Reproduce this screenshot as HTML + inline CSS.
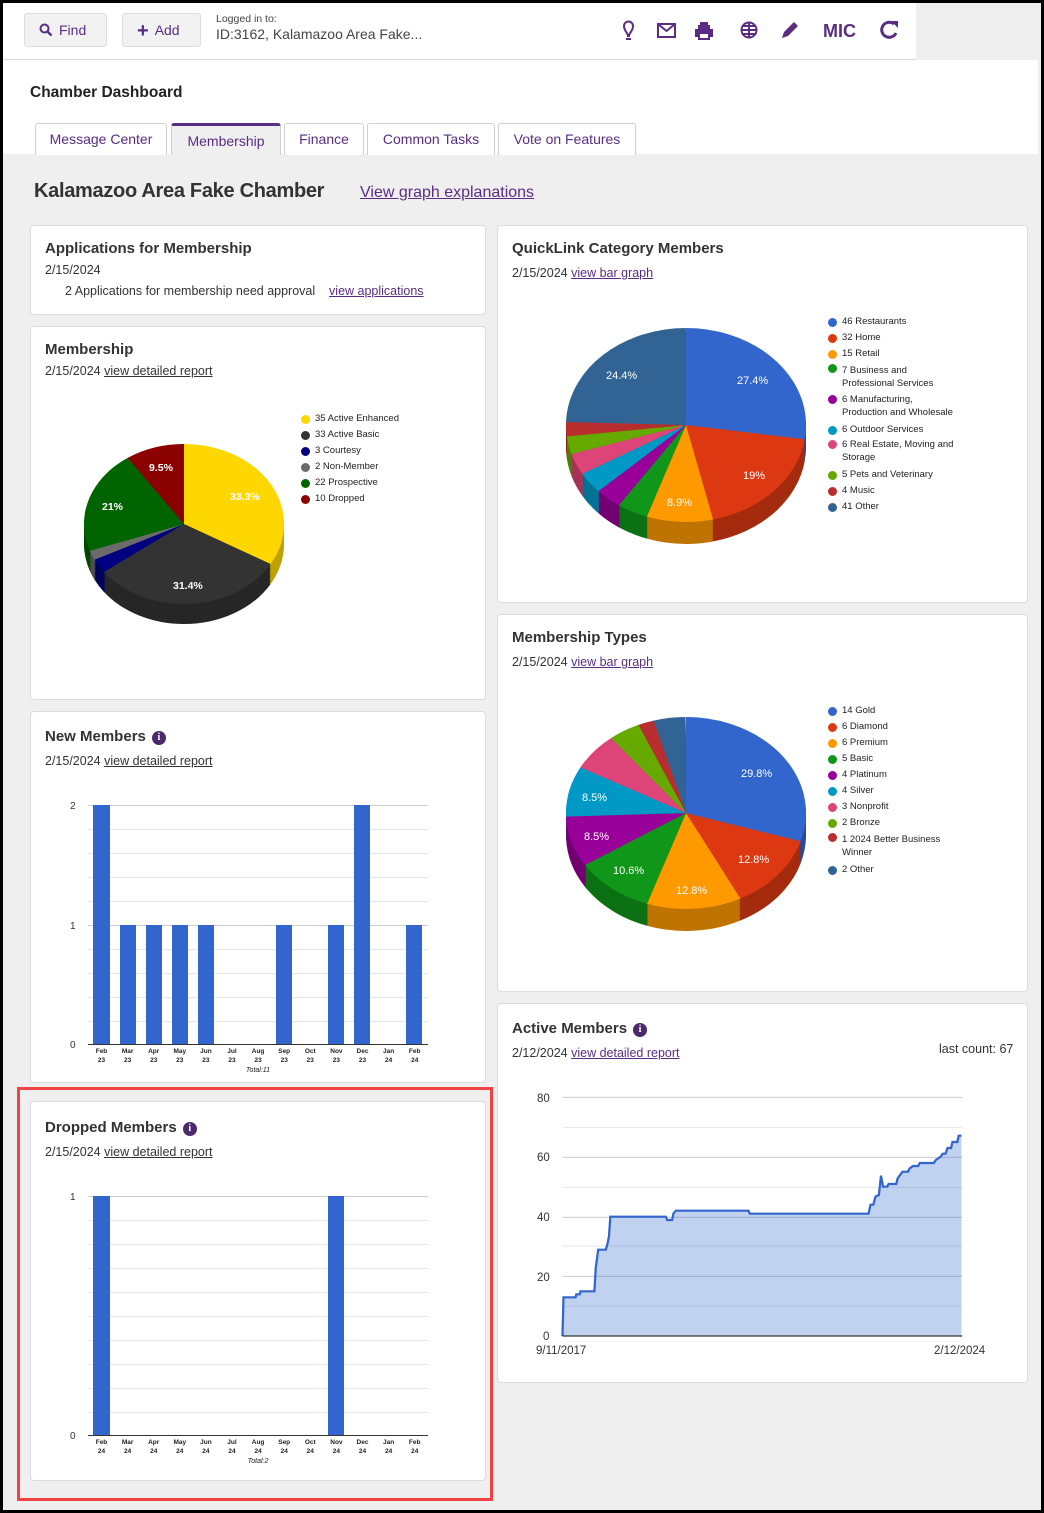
<!DOCTYPE html>
<html><head><meta charset="utf-8">
<style>
*{box-sizing:border-box;margin:0;padding:0}
body{width:1044px;height:1513px;background:#000;font-family:"Liberation Sans",sans-serif;position:relative;overflow:hidden;color:#333}
.abs{position:absolute}
#page{position:absolute;left:3px;top:3px;width:1038px;height:1507px;background:#efefef}
.card{position:absolute;background:#fff;border:1px solid #dcdcdc;border-radius:4px}
.ttl{position:absolute;font-size:15px;font-weight:bold;color:#333}
.sub{position:absolute;font-size:12.5px;color:#333}
.sub a,a{color:#5a2d82;text-decoration:underline}
.sub a.d{color:#333}
.btn{position:absolute;top:13px;height:34px;background:#f2f2f2;border:1px solid #ddd;border-radius:3px;color:#5a2d82;font-size:14px;line-height:32px;padding-left:14px}
.tab{position:absolute;top:120px;height:32px;border:1px solid #d0d0d0;border-bottom:none;background:#fff;color:#5a2d82;font-size:14px;text-align:center;line-height:30px;border-radius:3px 3px 0 0}
.info{display:inline-block;width:14px;height:14px;border-radius:50%;background:#4b2a6b;color:#fff;font-size:10px;font-weight:bold;text-align:center;line-height:14px;vertical-align:1px;margin-left:6px;font-family:"Liberation Serif",serif}
.lg{position:absolute;font-size:9.5px;color:#222;line-height:16px}
.lg div{position:relative;padding-left:14px}
.lg div i{position:absolute;left:0;top:4px;width:9px;height:9px;border-radius:50%}
svg text{font-family:"Liberation Sans",sans-serif}
</style></head><body>
<div id="page"></div>
<div class="abs" style="left:3px;top:3px;width:913px;height:57px;background:#fff;border-bottom:1px solid #ddd"></div>
<div class="btn" style="left:24px;width:83px">
<svg width="14" height="14" viewBox="0 0 14 14" style="vertical-align:-2px;margin-right:6px"><circle cx="5.5" cy="5.5" r="4" fill="none" stroke="#5a2d82" stroke-width="2"/><path d="M8.5 8.5L12.5 12.5" stroke="#5a2d82" stroke-width="2.4"/></svg>Find</div>
<div class="btn" style="left:122px;width:79px"><span style="font-size:20px;vertical-align:-2px;margin-right:6px;font-weight:bold">+</span>Add</div>
<div class="abs" style="left:216px;top:13px;font-size:10.5px;color:#444">Logged in to:</div>
<div class="abs" style="left:216px;top:26px;font-size:14px;color:#444">ID:3162, Kalamazoo Area Fake...</div>
<svg class="abs" style="left:600px;top:14px" width="310" height="34" viewBox="0 0 310 34">
<g fill="none" stroke="#5a2d82" stroke-width="2">
<path d="M28 22c0-3-4-5-4-10a4.5 4.5 0 0 1 9 0c0 5-4 7-4 10z"/><path d="M26 25h5"/>
<rect x="58" y="10" width="17" height="13"/><path d="M58 10l8.5 7 8.5-7"/>
<circle cx="149" cy="16" r="7.5"/><path d="M141.5 16h15M149 8.5v15M143 12h12M143 20h12"/>
</g>
<path d="M98 11h12v4h3v8h-3v3h-12v-3h-3v-8h3z" fill="#5a2d82"/><rect x="100" y="8" width="8" height="4" fill="#5a2d82"/><rect x="100" y="20" width="8" height="4" fill="#fff"/>
<path d="M182 24l2-6 10-10 4 4-10 10z" fill="#5a2d82"/>
<text x="223" y="23" font-size="18" font-weight="bold" fill="#5a2d82">MIC</text>
<path d="M294 10a7.5 7.5 0 1 0 2 9" fill="none" stroke="#5a2d82" stroke-width="3"/><path d="M291 7h7v7z" fill="#5a2d82"/>
</svg>
<div class="abs" style="left:916px;top:3px;width:125px;height:57px;background:#efefef"></div>
<div class="abs" style="left:3px;top:60px;width:1035px;height:94px;background:#fff"></div>
<div class="abs" style="left:30px;top:84px;font-size:15.5px;font-weight:bold;color:#222">Chamber Dashboard</div>
<div class="tab" style="left:35px;width:132px;top:123px">Message Center</div>
<div class="tab" style="left:171px;width:110px;top:123px;background:#efefef;border-top:3px solid #5a2d82;line-height:30px;height:32px">Membership</div>
<div class="tab" style="left:284px;width:80px;top:123px">Finance</div>
<div class="tab" style="left:367px;width:128px;top:123px">Common Tasks</div>
<div class="tab" style="left:498px;width:138px;top:123px">Vote on Features</div>
<div class="abs" style="left:34px;top:180px;font-size:20px;letter-spacing:-0.3px;font-weight:bold;color:#333">Kalamazoo Area Fake Chamber</div>
<div class="abs" style="left:360px;top:184px;font-size:16px"><a>View graph explanations</a></div>

<div class="card" style="left:30px;top:225px;width:456px;height:90px"></div>
<div class="ttl" style="left:45px;top:240px">Applications for Membership</div>
<div class="sub" style="left:45px;top:263px">2/15/2024</div>
<div class="sub" style="left:65px;top:284px">2 Applications for membership need approval &nbsp;&nbsp;&nbsp;<a>view applications</a></div>

<div class="card" style="left:30px;top:326px;width:456px;height:374px"></div>
<div class="ttl" style="left:45px;top:341px">Membership</div>
<div class="sub" style="left:45px;top:364px">2/15/2024 <a class="d">view detailed report</a></div>

<div class="card" style="left:30px;top:711px;width:456px;height:372px"></div>
<div class="ttl" style="left:45px;top:728px">New Members<span class="info">i</span></div>
<div class="sub" style="left:45px;top:754px">2/15/2024 <a class="d">view detailed report</a></div>

<div class="abs" style="left:17px;top:1087px;width:476px;height:414px;border:3px solid #f04444"></div>
<div class="card" style="left:30px;top:1101px;width:456px;height:380px"></div>
<div class="ttl" style="left:45px;top:1119px">Dropped Members<span class="info">i</span></div>
<div class="sub" style="left:45px;top:1145px">2/15/2024 <a class="d">view detailed report</a></div>

<div class="card" style="left:497px;top:225px;width:531px;height:378px"></div>
<div class="ttl" style="left:512px;top:240px">QuickLink Category Members</div>
<div class="sub" style="left:512px;top:266px">2/15/2024 <a>view bar graph</a></div>

<div class="card" style="left:497px;top:614px;width:531px;height:378px"></div>
<div class="ttl" style="left:512px;top:629px">Membership Types</div>
<div class="sub" style="left:512px;top:655px">2/15/2024 <a>view bar graph</a></div>

<div class="card" style="left:497px;top:1003px;width:531px;height:380px"></div>
<div class="ttl" style="left:512px;top:1020px">Active Members<span class="info">i</span></div>
<div class="sub" style="left:512px;top:1046px">2/12/2024 <a>view detailed report</a></div>
<div class="sub" style="left:939px;top:1042px">last count: 67</div>

<div class="lg" style="left:301px;top:411px">
<div><i style="background:#ffd700"></i>35 Active Enhanced</div><div><i style="background:#333"></i>33 Active Basic</div><div><i style="background:#000080"></i>3 Courtesy</div><div><i style="background:#6b6b6b"></i>2 Non-Member</div><div><i style="background:#006400"></i>22 Prospective</div><div><i style="background:#8b0000"></i>10 Dropped</div></div>
<div class="lg" style="left:828px;top:314px;line-height:16px">
<div><i style="background:#3366cc"></i>46 Restaurants</div><div><i style="background:#dc3912"></i>32 Home</div><div><i style="background:#ff9900"></i>15 Retail</div><div style="line-height:13px;padding-bottom:3px;padding-top:2px"><i style="background:#109618;top:2px"></i>7 Business and<br>Professional Services</div><div style="line-height:13px;padding-bottom:3px;padding-top:0px"><i style="background:#990099;top:2px"></i>6 Manufacturing,<br>Production and Wholesale</div><div><i style="background:#0099c6"></i>6 Outdoor Services</div><div style="line-height:13px;padding-bottom:3px"><i style="background:#dd4477;top:2px"></i>6 Real Estate, Moving and<br>Storage</div><div><i style="background:#66aa00"></i>5 Pets and Veterinary</div><div><i style="background:#b82e2e"></i>4 Music</div><div><i style="background:#316395"></i>41 Other</div></div>
<div class="lg" style="left:828px;top:703px">
<div><i style="background:#3366cc"></i>14 Gold</div><div><i style="background:#dc3912"></i>6 Diamond</div><div><i style="background:#ff9900"></i>6 Premium</div><div><i style="background:#109618"></i>5 Basic</div><div><i style="background:#990099"></i>4 Platinum</div><div><i style="background:#0099c6"></i>4 Silver</div><div><i style="background:#dd4477"></i>3 Nonprofit</div><div><i style="background:#66aa00"></i>2 Bronze</div><div style="line-height:13px;padding-bottom:3px;padding-top:2px"><i style="background:#b82e2e;top:2px"></i>1 2024 Better Business<br>Winner</div><div><i style="background:#316395"></i>2 Other</div></div>

<svg class="abs" style="left:0;top:0" width="1044" height="1513" viewBox="0 0 1044 1513">
<defs>
<g id="m1d" transform="translate(184,524) scale(1,0.8) rotate(-90)" fill="none" stroke-width="100">
<circle r="50" pathLength="100" stroke="#bfa200" stroke-dasharray="33.4 100"/>
<circle r="50" pathLength="100" stroke="#262626" stroke-dasharray="31.5 100" stroke-dashoffset="-33.33"/>
<circle r="50" pathLength="100" stroke="#00005a" stroke-dasharray="2.9 100" stroke-dashoffset="-64.76"/>
<circle r="50" pathLength="100" stroke="#4e4e4e" stroke-dasharray="2 100" stroke-dashoffset="-67.62"/>
<circle r="50" pathLength="100" stroke="#004800" stroke-dasharray="21 100" stroke-dashoffset="-69.52"/>
<circle r="50" pathLength="100" stroke="#600000" stroke-dasharray="9.6 100" stroke-dashoffset="-90.48"/>
</g>
<g id="q1d" transform="translate(686,425) scale(1,0.808) rotate(-90)" fill="none" stroke-width="120">
<circle r="60" pathLength="100" stroke="#264c99" stroke-dasharray="27.5 100"/>
<circle r="60" pathLength="100" stroke="#a52b0e" stroke-dasharray="19.1 100" stroke-dashoffset="-27.38"/>
<circle r="60" pathLength="100" stroke="#bf7300" stroke-dasharray="9 100" stroke-dashoffset="-46.43"/>
<circle r="60" pathLength="100" stroke="#0c7112" stroke-dasharray="4.2 100" stroke-dashoffset="-55.36"/>
<circle r="60" pathLength="100" stroke="#730073" stroke-dasharray="3.6 100" stroke-dashoffset="-59.53"/>
<circle r="60" pathLength="100" stroke="#007394" stroke-dasharray="3.6 100" stroke-dashoffset="-63.10"/>
<circle r="60" pathLength="100" stroke="#a63359" stroke-dasharray="3.6 100" stroke-dashoffset="-66.67"/>
<circle r="60" pathLength="100" stroke="#4c8000" stroke-dasharray="3 100" stroke-dashoffset="-70.24"/>
<circle r="60" pathLength="100" stroke="#8a2222" stroke-dasharray="2.4 100" stroke-dashoffset="-73.22"/>
<circle r="60" pathLength="100" stroke="#254a70" stroke-dasharray="24.5 100" stroke-dashoffset="-75.60"/>
</g>
<g id="t1d" transform="translate(686,813) scale(1,0.8) rotate(-90)" fill="none" stroke-width="120">
<circle r="60" pathLength="100" stroke="#264c99" stroke-dasharray="29.9 100"/>
<circle r="60" pathLength="100" stroke="#a52b0e" stroke-dasharray="12.8 100" stroke-dashoffset="-29.79"/>
<circle r="60" pathLength="100" stroke="#bf7300" stroke-dasharray="12.8 100" stroke-dashoffset="-42.56"/>
<circle r="60" pathLength="100" stroke="#0c7112" stroke-dasharray="10.7 100" stroke-dashoffset="-55.33"/>
<circle r="60" pathLength="100" stroke="#730073" stroke-dasharray="8.6 100" stroke-dashoffset="-65.97"/>
<circle r="60" pathLength="100" stroke="#007394" stroke-dasharray="8.6 100" stroke-dashoffset="-74.48"/>
<circle r="60" pathLength="100" stroke="#a63359" stroke-dasharray="6.4 100" stroke-dashoffset="-82.99"/>
<circle r="60" pathLength="100" stroke="#4c8000" stroke-dasharray="4.3 100" stroke-dashoffset="-89.37"/>
<circle r="60" pathLength="100" stroke="#8a2222" stroke-dasharray="2.2 100" stroke-dashoffset="-93.63"/>
<circle r="60" pathLength="100" stroke="#254a70" stroke-dasharray="4.3 100" stroke-dashoffset="-95.76"/>
</g>
</defs>
<use href="#m1d" y="20"/><use href="#m1d" y="18"/><use href="#m1d" y="16"/><use href="#m1d" y="14"/><use href="#m1d" y="12"/><use href="#m1d" y="10"/><use href="#m1d" y="8"/><use href="#m1d" y="6"/><use href="#m1d" y="4"/><use href="#m1d" y="2"/>
<g transform="translate(184,524) scale(1,0.8) rotate(-90)" fill="none" stroke-width="100">
<circle r="50" pathLength="100" stroke="#ffd700" stroke-dasharray="33.4 100"/>
<circle r="50" pathLength="100" stroke="#333333" stroke-dasharray="31.5 100" stroke-dashoffset="-33.33"/>
<circle r="50" pathLength="100" stroke="#000080" stroke-dasharray="2.9 100" stroke-dashoffset="-64.76"/>
<circle r="50" pathLength="100" stroke="#6b6b6b" stroke-dasharray="2 100" stroke-dashoffset="-67.62"/>
<circle r="50" pathLength="100" stroke="#006400" stroke-dasharray="21 100" stroke-dashoffset="-69.52"/>
<circle r="50" pathLength="100" stroke="#8b0000" stroke-dasharray="9.6 100" stroke-dashoffset="-90.48"/>
</g>
<g font-size="10.5" font-weight="bold" fill="#fff">
<text x="230" y="500">33.3%</text><text x="173" y="589">31.4%</text><text x="102" y="510">21%</text><text x="149" y="471">9.5%</text></g>
<use href="#q1d" y="22"/><use href="#q1d" y="20"/><use href="#q1d" y="18"/><use href="#q1d" y="16"/><use href="#q1d" y="14"/><use href="#q1d" y="12"/><use href="#q1d" y="10"/><use href="#q1d" y="8"/><use href="#q1d" y="6"/><use href="#q1d" y="4"/><use href="#q1d" y="2"/>
<g transform="translate(686,425) scale(1,0.808) rotate(-90)" fill="none" stroke-width="120">
<circle r="60" pathLength="100" stroke="#3366cc" stroke-dasharray="27.5 100"/>
<circle r="60" pathLength="100" stroke="#dc3912" stroke-dasharray="19.1 100" stroke-dashoffset="-27.38"/>
<circle r="60" pathLength="100" stroke="#ff9900" stroke-dasharray="9 100" stroke-dashoffset="-46.43"/>
<circle r="60" pathLength="100" stroke="#109618" stroke-dasharray="4.2 100" stroke-dashoffset="-55.36"/>
<circle r="60" pathLength="100" stroke="#990099" stroke-dasharray="3.6 100" stroke-dashoffset="-59.53"/>
<circle r="60" pathLength="100" stroke="#0099c6" stroke-dasharray="3.6 100" stroke-dashoffset="-63.10"/>
<circle r="60" pathLength="100" stroke="#dd4477" stroke-dasharray="3.6 100" stroke-dashoffset="-66.67"/>
<circle r="60" pathLength="100" stroke="#66aa00" stroke-dasharray="3 100" stroke-dashoffset="-70.24"/>
<circle r="60" pathLength="100" stroke="#b82e2e" stroke-dasharray="2.4 100" stroke-dashoffset="-73.22"/>
<circle r="60" pathLength="100" stroke="#316395" stroke-dasharray="24.5 100" stroke-dashoffset="-75.60"/>
</g>
<g font-size="11" fill="#fff">
<text x="737" y="384">27.4%</text><text x="743" y="479">19%</text><text x="667" y="506">8.9%</text><text x="606" y="379">24.4%</text></g>
<use href="#t1d" y="22"/><use href="#t1d" y="20"/><use href="#t1d" y="18"/><use href="#t1d" y="16"/><use href="#t1d" y="14"/><use href="#t1d" y="12"/><use href="#t1d" y="10"/><use href="#t1d" y="8"/><use href="#t1d" y="6"/><use href="#t1d" y="4"/><use href="#t1d" y="2"/>
<g transform="translate(686,813) scale(1,0.8) rotate(-90)" fill="none" stroke-width="120">
<circle r="60" pathLength="100" stroke="#3366cc" stroke-dasharray="29.9 100"/>
<circle r="60" pathLength="100" stroke="#dc3912" stroke-dasharray="12.8 100" stroke-dashoffset="-29.79"/>
<circle r="60" pathLength="100" stroke="#ff9900" stroke-dasharray="12.8 100" stroke-dashoffset="-42.56"/>
<circle r="60" pathLength="100" stroke="#109618" stroke-dasharray="10.7 100" stroke-dashoffset="-55.33"/>
<circle r="60" pathLength="100" stroke="#990099" stroke-dasharray="8.6 100" stroke-dashoffset="-65.97"/>
<circle r="60" pathLength="100" stroke="#0099c6" stroke-dasharray="8.6 100" stroke-dashoffset="-74.48"/>
<circle r="60" pathLength="100" stroke="#dd4477" stroke-dasharray="6.4 100" stroke-dashoffset="-82.99"/>
<circle r="60" pathLength="100" stroke="#66aa00" stroke-dasharray="4.3 100" stroke-dashoffset="-89.37"/>
<circle r="60" pathLength="100" stroke="#b82e2e" stroke-dasharray="2.2 100" stroke-dashoffset="-93.63"/>
<circle r="60" pathLength="100" stroke="#316395" stroke-dasharray="4.3 100" stroke-dashoffset="-95.76"/>
</g>
<g font-size="11" fill="#fff">
<text x="741" y="777">29.8%</text><text x="738" y="863">12.8%</text><text x="676" y="894">12.8%</text><text x="613" y="874">10.6%</text><text x="584" y="840">8.5%</text><text x="582" y="801">8.5%</text></g>

<g stroke="#e6e6e6" stroke-width="1">
<path d="M88 829.5H428M88 853.5H428M88 877.5H428M88 901.5H428M88 949.5H428M88 973.5H428M88 997.5H428M88 1021.5H428"/></g>
<g stroke="#cccccc"><path d="M88 805.5H428M88 925.5H428"/></g>
<g fill="#3366cc">
<rect x="93" y="805" width="17" height="239"/><rect x="120" y="925" width="16" height="119"/><rect x="146" y="925" width="16" height="119"/><rect x="172" y="925" width="16" height="119"/><rect x="198" y="925" width="16" height="119"/>
<rect x="276" y="925" width="16" height="119"/><rect x="328" y="925" width="16" height="119"/><rect x="354" y="805" width="16" height="239"/><rect x="406" y="925" width="16" height="119"/></g>
<path d="M88 1044.5H428" stroke="#333"/>
<g font-size="10" fill="#333"><text x="70" y="809">2</text><text x="70" y="929">1</text><text x="70" y="1048">0</text></g>
<g font-size="6.5" fill="#222" text-anchor="middle" font-weight="bold">
<text x="101.5" y="1053">Feb</text><text x="127.6" y="1053">Mar</text><text x="153.7" y="1053">Apr</text><text x="179.8" y="1053">May</text><text x="205.9" y="1053">Jun</text><text x="232" y="1053">Jul</text><text x="258.1" y="1053">Aug</text><text x="284.2" y="1053">Sep</text><text x="310.3" y="1053">Oct</text><text x="336.4" y="1053">Nov</text><text x="362.5" y="1053">Dec</text><text x="388.6" y="1053">Jan</text><text x="414.7" y="1053">Feb</text>
<text x="101.5" y="1062">23</text><text x="127.6" y="1062">23</text><text x="153.7" y="1062">23</text><text x="179.8" y="1062">23</text><text x="205.9" y="1062">23</text><text x="232" y="1062">23</text><text x="258.1" y="1062">23</text><text x="284.2" y="1062">23</text><text x="310.3" y="1062">23</text><text x="336.4" y="1062">23</text><text x="362.5" y="1062">23</text><text x="388.6" y="1062">24</text><text x="414.7" y="1062">24</text></g>
<text x="258" y="1072" font-size="7" font-style="italic" text-anchor="middle" fill="#222">Total:11</text>

<g stroke="#e6e6e6"><path d="M88 1220.5H428M88 1244.5H428M88 1268.5H428M88 1292.5H428M88 1316.5H428M88 1340.5H428M88 1364.5H428M88 1388.5H428M88 1412.5H428"/></g>
<path d="M88 1196.5H428" stroke="#ccc"/>
<g fill="#3366cc"><rect x="93" y="1196" width="17" height="239"/><rect x="328" y="1196" width="16" height="239"/></g>
<path d="M88 1435.5H428" stroke="#333"/>
<g font-size="10" fill="#333"><text x="70" y="1200">1</text><text x="70" y="1439">0</text></g>
<g font-size="6.5" fill="#222" text-anchor="middle" font-weight="bold">
<text x="101.5" y="1444">Feb</text><text x="127.6" y="1444">Mar</text><text x="153.7" y="1444">Apr</text><text x="179.8" y="1444">May</text><text x="205.9" y="1444">Jun</text><text x="232" y="1444">Jul</text><text x="258.1" y="1444">Aug</text><text x="284.2" y="1444">Sep</text><text x="310.3" y="1444">Oct</text><text x="336.4" y="1444">Nov</text><text x="362.5" y="1444">Dec</text><text x="388.6" y="1444">Jan</text><text x="414.7" y="1444">Feb</text>
<text x="101.5" y="1453">24</text><text x="127.6" y="1453">24</text><text x="153.7" y="1453">24</text><text x="179.8" y="1453">24</text><text x="205.9" y="1453">24</text><text x="232" y="1453">24</text><text x="258.1" y="1453">24</text><text x="284.2" y="1453">24</text><text x="310.3" y="1453">24</text><text x="336.4" y="1453">24</text><text x="362.5" y="1453">24</text><text x="388.6" y="1453">24</text><text x="414.7" y="1453">24</text></g>
<text x="258" y="1463" font-size="7" font-style="italic" text-anchor="middle" fill="#222">Total:2</text>

<g transform="translate(500,1080) scale(0.34698,0.33333)">
<g stroke="#e6e6e6" stroke-width="3"><path d="M180 142H1332M180 322H1332M180 498H1332M180 679H1332"/></g>
<g stroke="#cccccc" stroke-width="3"><path d="M180 52H1332M180 232H1332M180 412H1332M180 589H1332"/></g>
<path d="M180 768L183 652L218 652L220 643L230 643L232 634L272 634L276 563L283 509L305 509L310 490L314 470L318 410L478 410L482 420L496 420L500 400L507 392L716 392L720 401L1062 401L1068 374L1076 374L1082 350L1092 345L1098 287L1104 320L1116 320L1120 312L1142 312L1146 295L1160 275L1176 275L1180 266L1190 258L1205 258L1210 249L1250 249L1256 240L1270 230L1276 221L1284 221L1290 204L1300 204L1304 186L1318 186L1322 167L1330 167L1330 768Z" fill="#3366cc" fill-opacity="0.3"/>
<path d="M180 768L183 652L218 652L220 643L230 643L232 634L272 634L276 563L283 509L305 509L310 490L314 470L318 410L478 410L482 420L496 420L500 400L507 392L716 392L720 401L1062 401L1068 374L1076 374L1082 350L1092 345L1098 287L1104 320L1116 320L1120 312L1142 312L1146 295L1160 275L1176 275L1180 266L1190 258L1205 258L1210 249L1250 249L1256 240L1270 230L1276 221L1284 221L1290 204L1300 204L1304 186L1318 186L1322 167L1330 167" fill="none" stroke="#3366cc" stroke-width="6.5"/>
<path d="M180 768H1332" stroke="#333" stroke-width="4"/>
</g>
<g font-size="11.5" fill="#333"><text x="537" y="1102">80</text><text x="537" y="1161">60</text><text x="537" y="1221">40</text><text x="537" y="1281">20</text><text x="543" y="1340">0</text>
<text x="536" y="1354">9/11/2017</text><text x="934" y="1354">2/12/2024</text></g>
</svg>
</body></html>
